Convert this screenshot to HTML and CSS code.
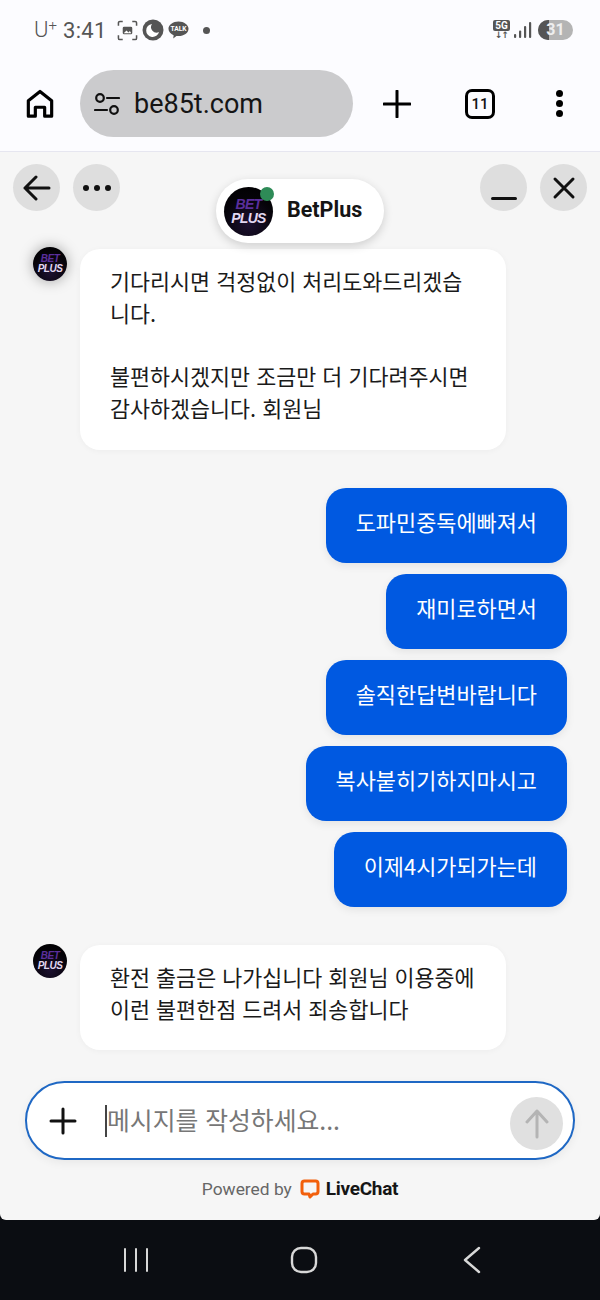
FILE: index.html
```html
<!DOCTYPE html>
<html lang="ko">
<head>
    <meta charset="UTF-8">
    <meta name="viewport" content="width=device-width, initial-scale=1.0">
    <title>BetPlus</title>
    <link rel="stylesheet" href="styles.css">
</head>
<body>

<div class="phone">
    <!-- status bar -->
    <div class="status-bar">
        <div class="status-left">
            <span class="carrier">U<sup>+</sup></span>
            <span class="clock">3:41</span>
            <svg class="status-icon" width="21" height="21" viewBox="0 0 22 22" fill="none" stroke="#555" stroke-width="1.6">
                <path d="M1.500 6V3a1.500 1.500 0 0 1 1.500-1.500h3M16 1.500h3A1.500 1.500 0 0 1 20.500 3v3M20.500 16v3a1.500 1.500 0 0 1-1.500 1.500h-3M6 20.500H3A1.500 1.500 0 0 1 1.500 19v-3"/>
                <rect x="6" y="7" width="10" height="8" rx="1.500" fill="#555" stroke="none"/>
                <path d="M7 14l3-3 2 2 1.500-1.500L15 14z" fill="#fff" stroke="none"/>
            </svg>
            <svg class="status-icon" width="22" height="22" viewBox="0 0 22 22">
                <circle cx="11" cy="11" r="10.500" fill="#555"/>
                <path d="M10 5a6.500 6.500 0 1 0 7 8a5.500 5.500 0 0 1-7-8z" fill="#fff"/>
            </svg>
            <svg class="status-icon" width="21" height="20" viewBox="0 0 22 20">
                <path d="M11 1c5.800 0 10.500 3.400 10.500 7.700s-4.700 7.700-10.500 7.700c-.8 0-1.500-.1-2.200-.2L5.500 19l.4-3.600C2.600 14 .5 11.500.5 8.700.5 4.400 5.200 1 11 1z" fill="#555"/>
                <text x="11" y="11" class="talk-text">TALK</text>
            </svg>
            <span class="status-dot"></span>
        </div>
        <div class="status-right">
            <div class="net-badge">
                <span class="net-5g">5G</span>
                <span class="net-arrows">↓↑</span>
            </div>
            <svg width="18" height="18" viewBox="0 0 18 18" fill="#555">
                <rect x="0" y="13" width="2.200" height="4" rx="1"/>
                <rect x="5" y="9.500" width="2.200" height="7.500" rx="1"/>
                <rect x="10" y="5" width="2.200" height="12" rx="1"/>
                <rect x="15" y="1" width="2.200" height="16" rx="1"/>
            </svg>
            <div class="battery"><span class="battery-level"></span><span class="battery-num">31</span></div>
        </div>
    </div>

    <!-- browser toolbar -->
    <div class="toolbar">
        <svg class="home-icon" width="28" height="30" viewBox="0 0 30 32" fill="none" stroke="#000" stroke-width="3.400">
            <path d="M2.500 29V12.500L15 2.500l12.500 10V29h-7.500v-9.500h-10V29z" stroke-linejoin="round"/>
        </svg>
        <div class="url-bar">
            <svg width="26" height="24" viewBox="0 0 26 24" fill="none" stroke="#111" stroke-width="2.200">
                <circle cx="6" cy="6" r="3.800"/>
                <path d="M13 6h12M1 18h12" stroke-linecap="round"/>
                <circle cx="20" cy="18" r="3.800"/>
            </svg>
            <span class="url-text">be85t.com</span>
        </div>
        <svg class="tool-plus" width="28" height="28" viewBox="0 0 28 28" stroke="#000" stroke-width="3" stroke-linecap="round">
            <path d="M14 1v26M1 14h26"/>
        </svg>
        <div class="tab-count">11</div>
        <div class="tool-menu"><span></span><span></span><span></span></div>
    </div>

    <!-- chat widget -->
    <div class="chat">
        <div class="chat-head">
            <div class="head-group">
                <button class="round-btn">
                    <svg width="28" height="26" viewBox="0 0 28 26" fill="none" stroke="#111" stroke-width="3" stroke-linecap="round" stroke-linejoin="round">
                        <path d="M26 13H2M13 2L2 13l11 11"/>
                    </svg>
                </button>
                <button class="round-btn">
                    <svg width="30" height="8" viewBox="0 0 30 8" fill="#111">
                        <circle cx="4" cy="4" r="3"/><circle cx="15" cy="4" r="3"/><circle cx="26" cy="4" r="3"/>
                    </svg>
                </button>
            </div>
            <div class="head-group">
                <button class="round-btn btn-min"><span class="min-bar"></span></button>
                <button class="round-btn">
                    <svg width="24" height="24" viewBox="0 0 24 24" stroke="#111" stroke-width="3" stroke-linecap="round">
                        <path d="M3 3l18 18M21 3L3 21"/>
                    </svg>
                </button>
            </div>
            <div class="agent-pill">
                <div class="logo logo-big"><span class="logo-bet">BET</span><span class="logo-plus">PLUS</span><span class="online-dot"></span></div>
                <span class="agent-name">BetPlus</span>
            </div>
        </div>

        <div class="messages">
            <div class="msg-agent msg-first">
                <div class="logo logo-small logo-glow"><span class="logo-bet">BET</span><span class="logo-plus">PLUS</span></div>
                <div class="bubble">기다리시면 걱정없이 처리도와드리겠습니다.<br><br>불편하시겠지만 조금만 더 기다려주시면 감사하겠습니다. 회원님</div>
            </div>
            <div class="msg-customer-list">
                <div class="bubble-blue">도파민중독에빠져서</div>
                <div class="bubble-blue">재미로하면서</div>
                <div class="bubble-blue">솔직한답변바랍니다</div>
                <div class="bubble-blue">복사붙히기하지마시고</div>
                <div class="bubble-blue">이제4시가되가는데</div>
            </div>
            <div class="msg-agent">
                <div class="logo logo-small"><span class="logo-bet">BET</span><span class="logo-plus">PLUS</span></div>
                <div class="bubble">환전 출금은 나가십니다 회원님 이용중에 이런 불편한점 드려서 죄송합니다</div>
            </div>
        </div>

        <div class="input-box">
            <svg class="input-plus" width="28" height="28" viewBox="0 0 28 28" stroke="#111" stroke-width="3" stroke-linecap="round">
                <path d="M14 2v24M2 14h24"/>
            </svg>
            <span class="caret"></span>
            <span class="placeholder">메시지를 작성하세요...</span>
            <div class="send-btn">
                <svg width="24" height="30" viewBox="0 0 24 30" fill="none" stroke="#b4b4b4" stroke-width="3" stroke-linecap="round" stroke-linejoin="round">
                    <path d="M12 28V2M2 13L12 2l10 11"/>
                </svg>
            </div>
        </div>

        <div class="powered">
            <span>Powered by</span>
            <svg width="20" height="20" viewBox="0 0 20 20" fill="none" stroke="#f2600c" stroke-width="3" stroke-linejoin="round">
                <path d="M4.500 2h11A2.500 2.500 0 0 1 18 4.500v8a2.500 2.500 0 0 1-2.500 2.500H13l-3 3-1-3H4.500A2.500 2.500 0 0 1 2 12.500v-8A2.500 2.500 0 0 1 4.500 2z"/>
            </svg>
            <span class="powered-brand">LiveChat</span>
        </div>
    </div>

    <!-- android nav -->
    <div class="nav-bar">
        <svg width="26" height="26" viewBox="0 0 26 26" stroke="#d8d8d8" stroke-width="2" stroke-linecap="round">
            <path d="M2 2v22M13 2v22M24 2v22"/>
        </svg>
        <svg width="28" height="28" viewBox="0 0 28 28" fill="none" stroke="#d8d8d8" stroke-width="2.400">
            <rect x="2" y="2" width="24" height="24" rx="9"/>
        </svg>
        <svg class="nav-back" width="18" height="28" viewBox="0 0 18 28" fill="none" stroke="#d8d8d8" stroke-width="2.400" stroke-linecap="round" stroke-linejoin="round">
            <path d="M16 2L2 14l14 12"/>
        </svg>
    </div>
</div>

</body>
</html>
```

FILE: styles.css
```css
* {
    box-sizing: border-box;
}
body {
    margin: 0;
    font-family: "Noto Sans CJK KR", "Noto Sans", sans-serif;
    background: #fcfcff;
}
.phone {
    width: 600px;
    height: 1300px;
    display: flex;
    flex-direction: column;
    overflow: hidden;
    background: #0b0d12;
}

/* status bar */
.status-bar {
    height: 60px;
    padding: 0 27px 0 34px;
    display: flex;
    justify-content: space-between;
    align-items: center;
    background: #fcfcff;
    color: #555;
}
.status-left {
    display: flex;
    align-items: center;
}
.carrier {
    font-family: Roboto, sans-serif;
    font-size: 22px;
    font-weight: 300;
    width: 29px;
    line-height: 24px;
}
.carrier sup {
    font-size: 15px;
    line-height: 0;
    vertical-align: 7px;
}
.clock {
    font-family: Roboto, sans-serif;
    font-size: 22px;
    font-weight: 400;
    letter-spacing: 0.3px;
    margin-right: 10px;
}
.status-icon {
    flex: none;
}
.status-left svg + svg {
    margin-left: 4px;
}
.talk-text {
    font-family: Roboto, sans-serif;
    font-size: 7px;
    font-weight: 700;
    fill: #fff;
    text-anchor: middle;
}
.status-dot {
    width: 7px;
    height: 7px;
    margin-left: 14px;
    border-radius: 50%;
    background: #555;
}
.status-right {
    display: flex;
    align-items: center;
    gap: 4px;
}
.net-badge {
    width: 17px;
    display: flex;
    flex-direction: column;
    align-items: center;
}
.net-5g {
    width: 17px;
    height: 11px;
    border-radius: 2px;
    background: #555;
    color: #fff;
    font-family: Roboto, sans-serif;
    font-size: 10px;
    font-weight: 700;
    line-height: 11px;
    text-align: center;
}
.net-arrows {
    font-family: "DejaVu Sans", sans-serif;
    font-size: 9px;
    font-weight: 700;
    line-height: 9px;
    letter-spacing: -1px;
}
.battery {
    position: relative;
    width: 35px;
    height: 20px;
    margin-left: 2px;
    display: flex;
    justify-content: center;
    align-items: center;
    border-radius: 10px;
    overflow: hidden;
    background: #b4b4b4;
}
.battery-level {
    position: absolute;
    left: 0;
    top: 0;
    bottom: 0;
    width: 11px;
    background: #555;
}
.battery-num {
    position: relative;
    font-family: Roboto, sans-serif;
    font-size: 16px;
    font-weight: 700;
    line-height: 18px;
    color: #eee;
}

/* toolbar */
.toolbar {
    height: 92px;
    padding: 10px 0 14px 0;
    display: flex;
    align-items: center;
    background: #fcfcff;
    border-bottom: 1px solid #e6e6f0;
}
.home-icon {
    margin: 0 26px 0 26px;
    flex: none;
}
.url-bar {
    width: 273px;
    height: 67px;
    padding-left: 14px;
    display: flex;
    align-items: center;
    gap: 14px;
    border-radius: 34px;
    background: #cbcbcd;
}
.url-text {
    font-family: Roboto, sans-serif;
    font-size: 27px;
    color: #151515;
}
.tool-plus {
    margin-left: 30px;
    flex: none;
}
.tab-count {
    width: 30px;
    height: 30px;
    margin-left: 54px;
    border: 3px solid #000;
    border-radius: 7px;
    font-family: Roboto, sans-serif;
    font-size: 15px;
    font-weight: 500;
    line-height: 24px;
    text-align: center;
    color: #111;
}
.tool-menu {
    margin-left: 61px;
    display: flex;
    flex-direction: column;
    gap: 3px;
}
.tool-menu span {
    width: 7px;
    height: 7px;
    border-radius: 50%;
    background: #000;
}

/* chat */
.chat {
    height: 1068px;
    display: flex;
    flex-direction: column;
    background: #f6f6f6;
    border-radius: 0 0 6px 6px;
}
.chat-head {
    position: relative;
    height: 97px;
    padding: 12px 13px 0 13px;
    display: flex;
    justify-content: space-between;
    align-items: flex-start;
}
.head-group {
    display: flex;
    gap: 13px;
}
.round-btn {
    width: 47px;
    height: 47px;
    padding: 0;
    display: flex;
    justify-content: center;
    align-items: center;
    border: none;
    border-radius: 50%;
    background: #dedede;
}
.btn-min {
    align-items: flex-end;
    padding-bottom: 11px;
}
.min-bar {
    width: 26px;
    height: 3px;
    border-radius: 2px;
    background: #111;
}
.agent-pill {
    position: absolute;
    left: 216px;
    top: 27px;
    width: 168px;
    height: 64px;
    padding-left: 8px;
    display: flex;
    align-items: center;
    gap: 14px;
    border-radius: 32px;
    background: #fff;
    box-shadow: 0 3px 10px rgba(0, 0, 0, 0.16);
}
.agent-name {
    font-family: Roboto, sans-serif;
    font-size: 21.500px;
    font-weight: 700;
    line-height: 24px;
    margin-top: -2px;
    color: #151515;
}

/* BetPlus logo */
.logo {
    position: relative;
    flex: none;
    display: flex;
    flex-direction: column;
    align-items: center;
    justify-content: center;
    border-radius: 50%;
    background: radial-gradient(circle at 50% 75%, #1c1030 0%, #050308 60%, #000 100%);
    font-family: "Liberation Sans", sans-serif;
    font-style: italic;
    font-weight: 700;
}
.logo-big {
    width: 49px;
    height: 49px;
    font-size: 14px;
    line-height: 14px;
    letter-spacing: -0.7px;
}
.logo-small {
    width: 34px;
    height: 34px;
    margin-top: -1px;
    font-size: 10px;
    line-height: 10px;
    letter-spacing: -0.5px;
}
.logo-glow {
    margin-top: -2px;
    box-shadow: 0 0 14px rgba(0, 0, 0, 0.35);
}
.logo-bet {
    color: #5b2f9c;
}
.logo-plus {
    color: #e2d8f2;
}
.online-dot {
    position: absolute;
    right: -1px;
    top: 0;
    width: 14px;
    height: 14px;
    border-radius: 50%;
    background: #2e8b57;
}

/* messages */
.messages {
    height: 820px;
    display: flex;
    flex-direction: column;
}
.msg-agent {
    padding-left: 33px;
    display: flex;
    gap: 13px;
    align-items: flex-start;
}
.msg-first {
    margin-bottom: 38px;
}
.bubble {
    width: 426px;
    padding: 16px 30px 26px 30px;
    border-radius: 20px;
    background: #fff;
    box-shadow: 0 1px 6px rgba(0, 0, 0, 0.04);
    font-size: 21.750px;
    line-height: 31.750px;
    color: #1a1a1a;
}
.msg-customer-list {
    padding-right: 33px;
    margin-bottom: 38px;
    display: flex;
    flex-direction: column;
    align-items: flex-end;
    gap: 11px;
}
.bubble-blue {
    height: 75px;
    padding: 0 30px 8px 30px;
    display: flex;
    align-items: center;
    border-radius: 20px 18px 18px 20px;
    background: #0059e1;
    box-shadow: 0 3px 8px rgba(0, 0, 0, 0.08);
    font-size: 21.900px;
    color: #fff;
}

/* input */
.input-box {
    position: relative;
    width: 550px;
    height: 79px;
    margin: 12px 0 0 25px;
    padding-left: 22px;
    display: flex;
    align-items: center;
    border: 2px solid #1f68c4;
    border-radius: 40px;
    background: #fff;
    box-shadow: 0 3px 10px rgba(0, 0, 0, 0.06);
}
.input-plus {
    flex: none;
}
.caret {
    width: 2px;
    height: 32px;
    margin-left: 28px;
    background: #444;
    flex: none;
}
.placeholder {
    margin-top: -3px;
    font-size: 24.800px;
    color: #777;
}
.send-btn {
    position: absolute;
    right: 10px;
    top: 14px;
    width: 53px;
    height: 53px;
    display: flex;
    justify-content: center;
    align-items: center;
    border-radius: 50%;
    background: #e0e0e0;
}
.powered {
    margin-top: 17px;
    display: flex;
    justify-content: center;
    align-items: center;
    gap: 8px;
    font-family: Roboto, sans-serif;
    font-size: 17.400px;
    color: #666;
}
.powered-brand {
    margin-left: -2px;
    font-size: 19px;
    font-weight: 700;
    letter-spacing: -0.3px;
    color: #151515;
}

/* nav */
.nav-bar {
    flex: 1;
    padding: 0 0 0 123px;
    display: flex;
    align-items: center;
    gap: 141px;
    background: #0b0d12;
}
.nav-back {
    margin-left: 4px;
}
```
